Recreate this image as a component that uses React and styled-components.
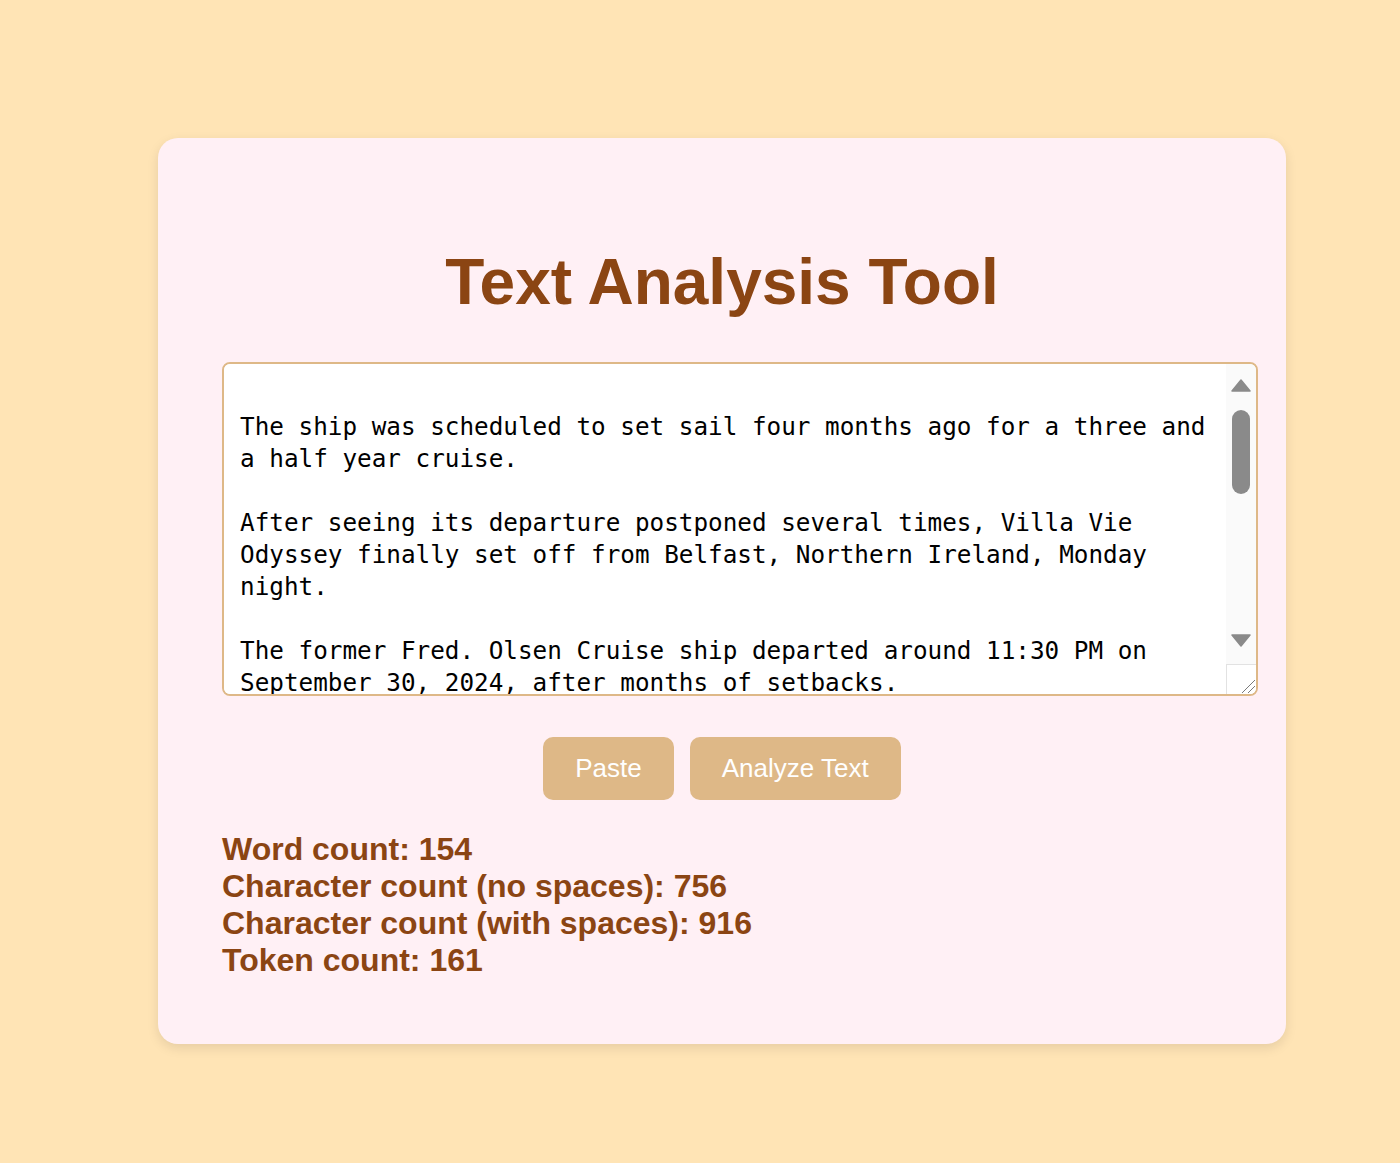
import React, { useRef, useState } from "react"
import styled, { createGlobalStyle } from "styled-components"

const colors = {
   page: "#ffe4b5",
   card: "#fff0f5",
   brown: "#8b4513",
   tan: "#deb887",
   thumb: "#8a8a8a",
   track: "#fafafa",
}

const TRACK = 220
const THUMB = 84

const GlobalStyle = createGlobalStyle`
   html, body {
      margin: 0;
      padding: 0;
      background: ${colors.page};
   }
   body {
      font-family: "Liberation Sans", Arial, sans-serif;
   }
`

const Page = styled.main`
   min-height: 100vh;
   box-sizing: border-box;
   padding: 138px 0 119px 158px;
`

const Card = styled.section`
   width: 1128px;
   box-sizing: border-box;
   padding: 64px 64px 65px;
   background: ${colors.card};
   border-radius: 20px;
   box-shadow: 0 4px 12px rgba(0, 0, 0, 0.1);
`

const Title = styled.h1`
   margin: 0.67em 0;
   font-size: 64px;
   font-weight: bold;
   text-align: center;
   color: ${colors.brown};
`

// textarea is 100% wide plus its padding and border, like a content-box textarea
const Editor = styled.div`
   display: flex;
   width: calc(100% + 36px);
   height: 334px;
   box-sizing: border-box;
   border: 2px solid ${colors.tan};
   border-radius: 8px;
   background: #fff;
   overflow: hidden;
`

const TextArea = styled.textarea`
   flex: 1;
   min-width: 0;
   margin: 0;
   padding: 15px 16px 16px;
   border: none;
   background: #fff;
   color: #000;
   font-family: "DejaVu Sans Mono", "Liberation Mono", monospace;
   font-size: 24.3px;
   line-height: 32px;
   outline: none;
   resize: none;
   scrollbar-width: none;
   &::-webkit-scrollbar {
      display: none;
   }
`

const ScrollBar = styled.div`
   width: 30px;
   display: flex;
   flex-direction: column;
   background: ${colors.track};
`

const Arrow = styled.div`
   height: 40px;
   display: flex;
   justify-content: center;
   align-items: ${(p) => (p.$down ? "flex-start" : "flex-end")};
   padding: ${(p) => (p.$down ? "10px 0 0" : "0 0 12px")};
   box-sizing: border-box;
   cursor: default;
`

const Track = styled.div`
   flex: 1;
   padding: 6px;
`

const Thumb = styled.div`
   height: ${THUMB}px;
   border-radius: 9px;
   background: ${colors.thumb};
`

const Resizer = styled.div`
   height: 30px;
   box-sizing: border-box;
   background: #fff;
   border-top: 1px solid #e2e2e2;
   border-left: 1px solid #e2e2e2;
   display: flex;
   align-items: flex-end;
   justify-content: flex-end;
`

const ButtonRow = styled.div`
   display: flex;
   justify-content: center;
   gap: 16px;
   margin-top: 41px;
`

const Button = styled.button`
   padding: 16px 32px;
   border: none;
   border-radius: 10px;
   background: ${colors.tan};
   color: #fff;
   font-family: "Liberation Sans", Arial, sans-serif;
   font-size: 26px;
   line-height: 31px;
   cursor: pointer;
`

const Stats = styled.div`
   margin-top: 31px;
`

const Stat = styled.p`
   margin: 0;
   font-size: 32px;
   line-height: 37px;
   font-weight: bold;
   color: ${colors.brown};
`

const sample = `
The ship was scheduled to set sail four months ago for a three and a half year cruise.

After seeing its departure postponed several times, Villa Vie Odyssey finally set off from Belfast, Northern Ireland, Monday night.

The former Fred. Olsen Cruise ship departed around 11:30 PM on September 30, 2024, after months of setbacks.

Passengers who had signed up for the voyage had been living in the city while repairs were carried out on the vessel, and many spent their time exploring the coast.

The residential cruise plans to visit more than 400 ports in nearly 150 countries before it returns, with some residents staying on board for the whole trip.

Company officials said the extra work was needed to meet safety rules.`

const stats = [
   { label: "Word count", value: 154 },
   { label: "Character count (no spaces)", value: 756 },
   { label: "Character count (with spaces)", value: 916 },
   { label: "Token count", value: 161 },
]

const Triangle = ({ down }) => (
   <svg width="20" height="13" viewBox="0 0 20 13">
      <path
         d={down ? "M1 1h18l-9 11z" : "M10 1l9 11H1z"}
         fill={colors.thumb}
         stroke={colors.thumb}
         strokeLinejoin="round"
         strokeWidth="1.5"
      />
   </svg>
)

export default function App() {
   const [text, setText] = useState(sample)
   const [scroll, setScroll] = useState(0)
   const ref = useRef(null)

   const onScroll = (e) => {
      const el = e.target
      const max = el.scrollHeight - el.clientHeight
      setScroll(max > 0 ? el.scrollTop / max : 0)
   }

   const nudge = (dy) => {
      if (ref.current) ref.current.scrollTop += dy
   }

   return (
      <>
         <GlobalStyle />
         <Page>
            <Card>
               <Title>Text Analysis Tool</Title>
               <Editor>
                  <TextArea ref={ref} value={text} onScroll={onScroll} onChange={(e) => setText(e.target.value)} />
                  <ScrollBar>
                     <Arrow onClick={() => nudge(-32)}>
                        <Triangle />
                     </Arrow>
                     <Track>
                        <Thumb style={{ transform: `translateY(${scroll * (TRACK - 12 - THUMB)}px)` }} />
                     </Track>
                     <Arrow $down onClick={() => nudge(32)}>
                        <Triangle down />
                     </Arrow>
                     <Resizer>
                        <svg width="16" height="16" viewBox="0 0 16 16">
                           <path d="M2 15L15 2M8 15l7-7" stroke="#7a7a7a" strokeWidth="1" />
                        </svg>
                     </Resizer>
                  </ScrollBar>
               </Editor>
               <ButtonRow>
                  <Button>Paste</Button>
                  <Button>Analyze Text</Button>
               </ButtonRow>
               <Stats>
                  {stats.map((s) => (
                     <Stat key={s.label}>
                        {s.label}: {s.value}
                     </Stat>
                  ))}
               </Stats>
            </Card>
         </Page>
      </>
   )
}
